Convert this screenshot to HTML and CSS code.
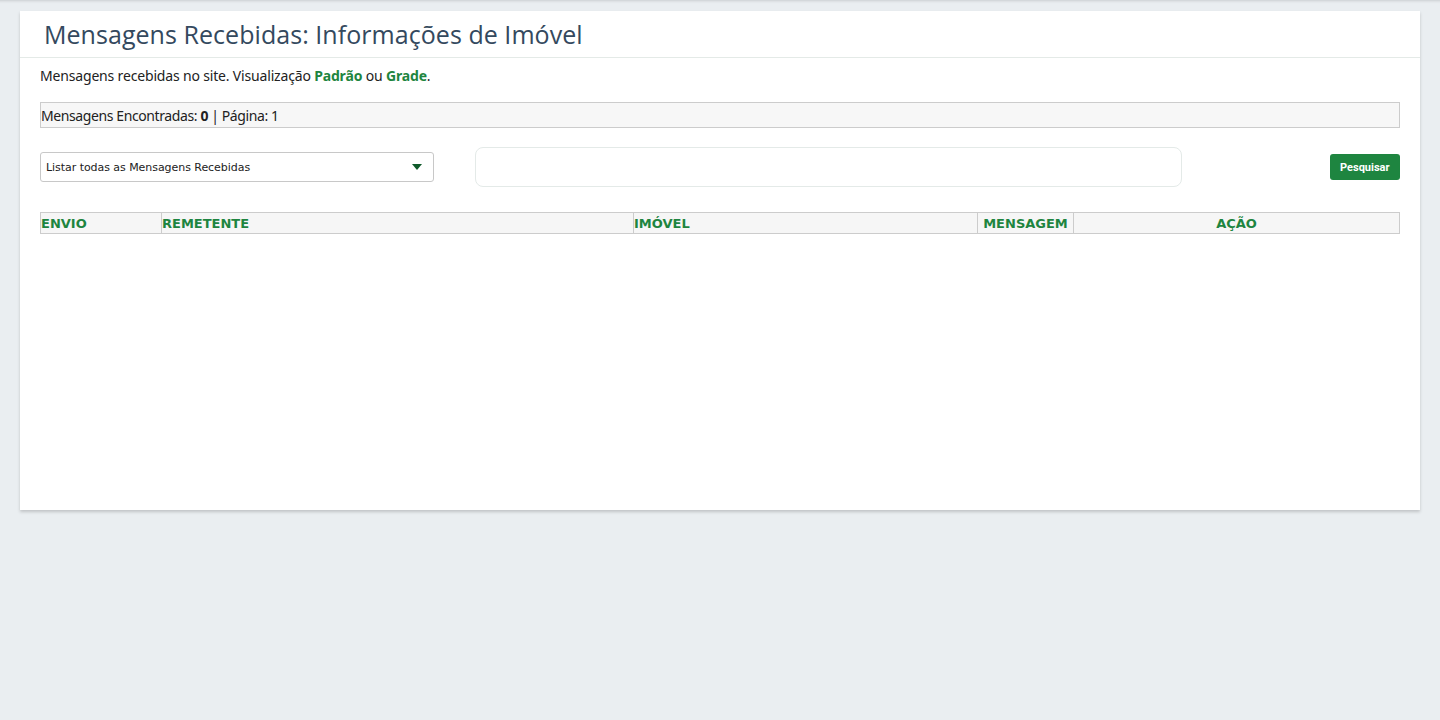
FILE: index.html
```html
<!DOCTYPE html>
<html lang="pt-BR">

<head>
    <meta charset="UTF-8">
    <meta name="viewport" content="width=device-width, initial-scale=1.0">
    <title>Mensagens Recebidas: Informações de Imóvel</title>
    <link rel="stylesheet" href="styles.css">
</head>

<body>

    <div class="painel">
        <div class="painel-titulo">
            <h1>Mensagens Recebidas: Informações de Imóvel</h1>
        </div>

        <div class="painel-corpo">
            <p class="descricao">Mensagens recebidas no site. Visualização <a href="#">Padrão</a> ou <a href="#">Grade</a>.</p>

            <div class="resumo">Mensagens Encontradas: <b>0</b> | Página: 1</div>

            <!-- Filtros -->
            <form class="filtros" onsubmit="return false">
                <div class="selecao">
                    <span>Listar todas as Mensagens Recebidas</span>
                    <svg width="12" height="7" viewBox="0 0 12 7"><path d="M1 0h10L6 6z" fill="#0f5a2a"/></svg>
                </div>
                <input class="busca" type="text">
                <button type="submit">Pesquisar</button>
            </form>

            <!-- Tabela de mensagens -->
            <table class="tabela">
                <thead>
                    <tr>
                        <th class="col-envio">ENVIO</th>
                        <th class="col-remetente">REMETENTE</th>
                        <th class="col-imovel">IMÓVEL</th>
                        <th class="col-mensagem">MENSAGEM</th>
                        <th class="col-acao">AÇÃO</th>
                    </tr>
                </thead>
                <tbody></tbody>
            </table>
        </div>
    </div>

</body>

</html>
```

FILE: styles.css
```css
body {
    margin: 0;
    padding: 11px 20px;
    background-color: #eaeef1;
    font-family: "Noto Sans", sans-serif;
    color: #222;
    min-height: 720px;
    box-sizing: border-box;
    box-shadow: inset 0 4px 3px -3px rgba(0, 0, 0, 0.14);
}

.painel {
    background-color: #fff;
    height: 499px;
    box-shadow: 0 2px 3px rgba(0, 0, 0, 0.18);
}

.painel-titulo {
    height: 47px;
    border-bottom: 1px solid #e4eae7;
    box-sizing: border-box;
    padding: 0 24px;
    display: flex;
    align-items: center;
}

.painel-titulo h1 {
    margin: 0;
    font-family: "Open Sans", sans-serif;
    font-weight: 400;
    font-size: 25px;
    color: #34495e;
    letter-spacing: 0.05px;
}

.painel-corpo {
    padding: 0 20px;
}

.descricao {
    margin: 8px 0 0;
    font-size: 14px;
    line-height: 20px;
    letter-spacing: -0.17px;
}

.descricao a {
    color: #1e8540;
    font-weight: bold;
    text-decoration: none;
}

.resumo {
    margin-top: 16px;
    height: 26px;
    box-sizing: border-box;
    background-color: #f7f7f7;
    border: 1px solid #cccccc;
    font-size: 14px;
    letter-spacing: -0.4px;
    line-height: 25px;
    padding-left: 0;
}

.filtros {
    display: flex;
    align-items: center;
    margin-top: 19px;
    height: 40px;
}

.selecao {
    width: 394px;
    height: 30px;
    box-sizing: border-box;
    border: 1px solid #c8c8c8;
    border-radius: 3px;
    display: flex;
    align-items: center;
    justify-content: space-between;
    padding: 0 10px 0 5px;
    font-family: "DejaVu Sans", Verdana, sans-serif;
    font-size: 11px;
    letter-spacing: -0.05px;
    color: #222;
}

.busca {
    margin-left: 41px;
    width: 707px;
    height: 40px;
    box-sizing: border-box;
    border: 1px solid #e4eae8;
    border-radius: 8px;
    outline: none;
}

button {
    margin-left: auto;
    height: 26px;
    padding: 0 10.5px;
    border: none;
    border-radius: 3px;
    background-color: #1e8540;
    color: #fff;
    font-family: Roboto, Arial, sans-serif;
    font-weight: bold;
    font-size: 11px;
    cursor: pointer;
}

.tabela {
    margin-top: 25px;
    width: 100%;
    border-collapse: collapse;
    table-layout: fixed;
}

.tabela th {
    background-color: #f6f6f6;
    border: 1px solid #cccccc;
    color: #1e8540;
    font-family: "DejaVu Sans", Verdana, sans-serif;
    font-size: 13px;
    font-weight: bold;
    text-align: left;
    height: 20px;
    padding: 0;
    line-height: 19px;
}

.col-envio { width: 120px; }
.col-remetente { width: 471px; }
.col-imovel { width: 343px; }
.col-mensagem { width: 95px; text-align: center !important; }
.col-acao { text-align: center !important; }
```
